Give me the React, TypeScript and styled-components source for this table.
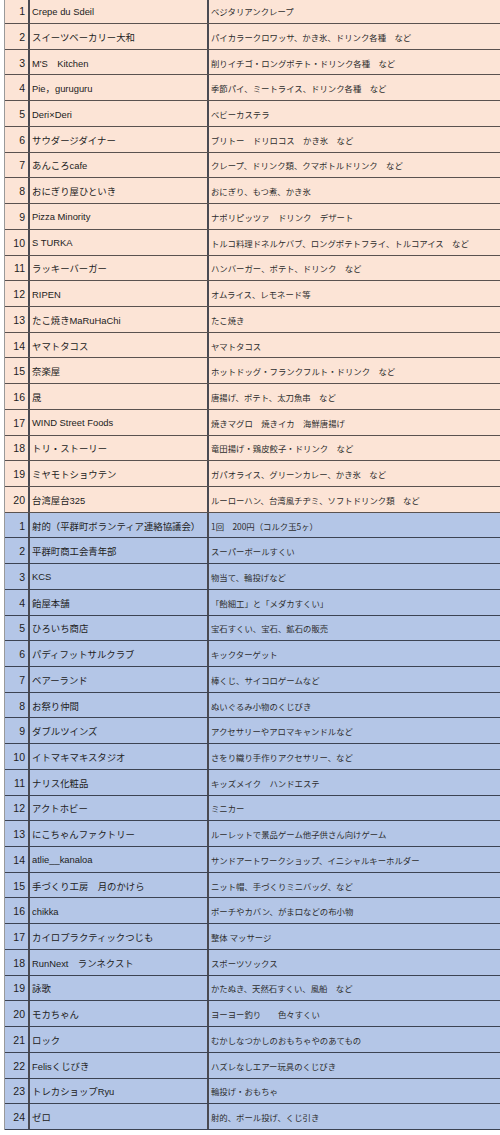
import React from "react";
import styled, { createGlobalStyle } from "styled-components";

const Global = createGlobalStyle`
  html, body { margin: 0; padding: 0; background: #ffffff; overflow: hidden; }
  body { width: 500px; height: 1135px; }
`;

const food: [string, string][] = [
  ["Crepe du Sdeil", "ベジタリアンクレープ"],
  ["スイーツベーカリー大和", "パイカラークロワッサ、かき氷、ドリンク各種　など"],
  ["M'S　Kitchen", "削りイチゴ・ロングポテト・ドリンク各種　など"],
  ["Pie，guruguru", "季節パイ、ミートライス、ドリンク各種　など"],
  ["Deri×Deri", "ベビーカステラ"],
  ["サウダージダイナー", "ブリトー　ドリロコス　かき氷　など"],
  ["あんころcafe", "クレープ、ドリンク類、クマボトルドリンク　など"],
  ["おにぎり屋ひといき", "おにぎり、もつ煮、かき氷"],
  ["Pizza Minority", "ナポリピッツァ　ドリンク　デザート"],
  ["S TURKA", "トルコ料理ドネルケバブ、ロングポテトフライ、トルコアイス　など"],
  ["ラッキーバーガー", "ハンバーガー、ポテト、ドリンク　など"],
  ["RIPEN", "オムライス、レモネード等"],
  ["たこ焼きMaRuHaChi", "たこ焼き"],
  ["ヤマトタコス", "ヤマトタコス"],
  ["奈楽屋", "ホットドッグ・フランクフルト・ドリンク　など"],
  ["晟", "唐揚げ、ポテト、太刀魚串　など"],
  ["WIND Street Foods", "焼きマグロ　焼きイカ　海鮮唐揚げ"],
  ["トリ・ストーリー", "竜田揚げ・鶏皮餃子・ドリンク　など"],
  ["ミヤモトショウテン", "ガパオライス、グリーンカレー、かき氷　など"],
  ["台湾屋台325", "ルーローハン、台湾風チヂミ、ソフトドリンク類　など"],
];

const games: [string, string][] = [
  ["射的（平群町ボランティア連絡協議会）", "1回　200円（コルク玉5ヶ）"],
  ["平群町商工会青年部", "スーパーボールすくい"],
  ["KCS", "物当て、輪投げなど"],
  ["飴屋本舗", "「飴細工」と「メダカすくい」"],
  ["ひろいち商店", "宝石すくい、宝石、鉱石の販売"],
  ["パディフットサルクラブ", "キックターゲット"],
  ["ベアーランド", "棒くじ、サイコロゲームなど"],
  ["お祭り仲間", "ぬいぐるみ小物のくじびき"],
  ["ダブルツインズ", "アクセサリーやアロマキャンドルなど"],
  ["イトマキマキスタジオ", "さをり織り手作りアクセサリー、など"],
  ["ナリス化粧品", "キッズメイク　ハンドエステ"],
  ["アクトホビー", "ミニカー"],
  ["にこちゃんファクトリー", "ルーレットで景品ゲーム他子供さん向けゲーム"],
  ["atlie__kanaloa", "サンドアートワークショップ、イニシャルキーホルダー"],
  ["手づくり工房　月のかけら", "ニット帽、手づくりミニバッグ、など"],
  ["chikka", "ポーチやカバン、がま口などの布小物"],
  ["カイロプラクティックつじも", "整体 マッサージ"],
  ["RunNext　ランネクスト", "スポーツソックス"],
  ["詠歌", "かたぬき、天然石すくい、風船　など"],
  ["モカちゃん", "ヨーヨー釣り　　色々すくい"],
  ["ロック", "むかしなつかしのおもちゃやのあてもの"],
  ["Felisくじびき", "ハズレなしエアー玩具のくじびき"],
  ["トレカショップRyu", "輪投げ・おもちゃ"],
  ["ゼロ", "射的、ボール投げ、くじ引き"],
];

const Viewport = styled.div`
  width: 500px;
  height: 1135px;
  overflow: hidden;
`;

const Sheet = styled.div`
  margin: -1.7px 0 0 4px;
  width: 520px;
  border-left: 1px solid #9a9a9a;
  display: flex;
  flex-direction: column;
`;

const Row = styled.div<{ $tone: "pink" | "blue" }>`
  display: grid;
  grid-template-columns: 25px 179px 1fr;
  height: 25.73px;
  box-sizing: border-box;
  border-bottom: 1px solid ${(p) => (p.$tone === "pink" ? "#5a5250" : "#3c4353")};
  background: ${(p) => (p.$tone === "pink" ? "#fce4d6" : "#b4c6e7")};
`;

const NumCell = styled.div`
  box-sizing: border-box;
  border-right: 2px solid #4a4a52;
  display: flex;
  align-items: center;
  justify-content: flex-end;
  padding: 1px 3px 0 0;
  font-family: "Liberation Sans", Arial, sans-serif;
  font-size: 10.5px;
  color: #222;
`;

const NameCell = styled.div`
  box-sizing: border-box;
  border-right: 2px solid #4a4a52;
  display: flex;
  align-items: center;
  padding: 1px 0 0 2px;
  font-family: "Liberation Sans", "Noto Sans CJK JP", sans-serif;
  font-size: 9.4px;
  color: #222;
  white-space: nowrap;
  overflow: hidden;
`;

const DescCell = styled.div`
  box-sizing: border-box;
  display: flex;
  align-items: center;
  padding: 1px 0 0 2px;
  font-family: "Noto Sans CJK JP", "Liberation Sans", sans-serif;
  font-size: 8.4px;
  color: #2e2e2e;
  white-space: nowrap;
  overflow: hidden;
`;

const Block: React.FC<{ items: [string, string][]; tone: "pink" | "blue" }> = ({
  items,
  tone,
}) => (
  <>
    {items.map(([name, desc], i) => (
      <Row key={tone + i} $tone={tone}>
        <NumCell>{i + 1}</NumCell>
        <NameCell>{name}</NameCell>
        <DescCell>{desc}</DescCell>
      </Row>
    ))}
  </>
);

export default function App() {
  return (
    <>
      <Global />
      <Viewport>
        <Sheet>
          <Block items={food} tone="pink" />
          <Block items={games} tone="blue" />
        </Sheet>
      </Viewport>
    </>
  );
}
